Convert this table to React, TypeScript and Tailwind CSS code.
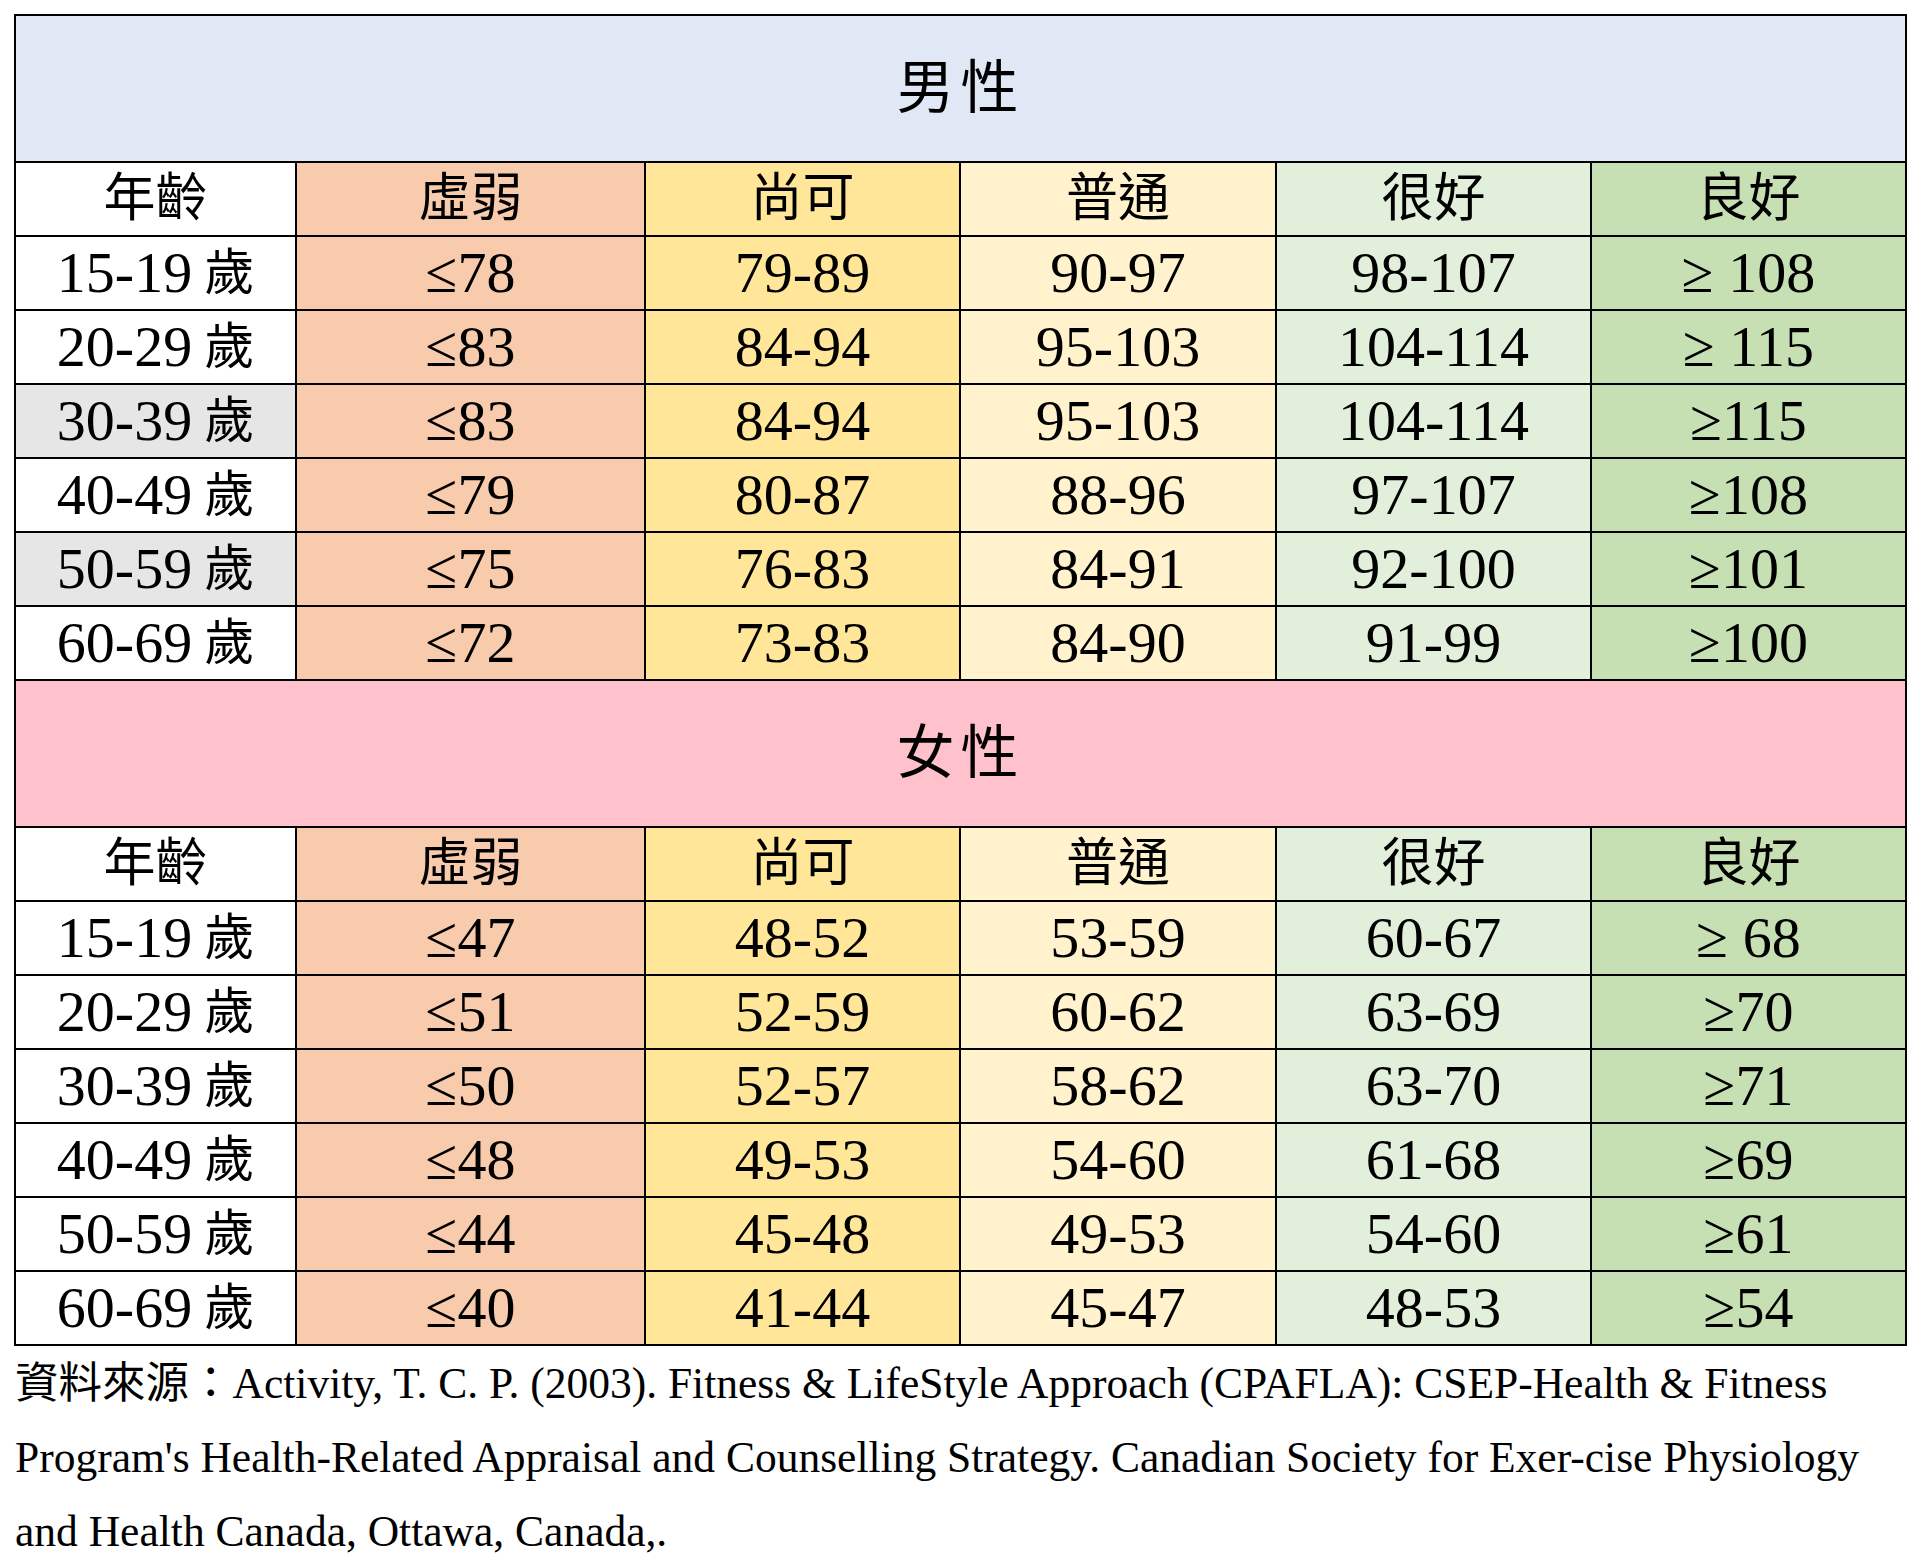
const levels = [
  { label: '虛弱', bg: 'bg-[#F8CBAD]' },
  { label: '尚可', bg: 'bg-[#FFE699]' },
  { label: '普通', bg: 'bg-[#FFF2CC]' },
  { label: '很好', bg: 'bg-[#E2EFDA]' },
  { label: '良好', bg: 'bg-[#C6E0B4]' },
]

type Row = { age: string; gray?: boolean; values: string[] }

const male: Row[] = [
  { age: '15-19', values: ['≤78', '79-89', '90-97', '98-107', '≥ 108'] },
  { age: '20-29', values: ['≤83', '84-94', '95-103', '104-114', '≥ 115'] },
  { age: '30-39', gray: true, values: ['≤83', '84-94', '95-103', '104-114', '≥115'] },
  { age: '40-49', values: ['≤79', '80-87', '88-96', '97-107', '≥108'] },
  { age: '50-59', gray: true, values: ['≤75', '76-83', '84-91', '92-100', '≥101'] },
  { age: '60-69', values: ['≤72', '73-83', '84-90', '91-99', '≥100'] },
]

const female: Row[] = [
  { age: '15-19', values: ['≤47', '48-52', '53-59', '60-67', '≥ 68'] },
  { age: '20-29', values: ['≤51', '52-59', '60-62', '63-69', '≥70'] },
  { age: '30-39', values: ['≤50', '52-57', '58-62', '63-70', '≥71'] },
  { age: '40-49', values: ['≤48', '49-53', '54-60', '61-68', '≥69'] },
  { age: '50-59', values: ['≤44', '45-48', '49-53', '54-60', '≥61'] },
  { age: '60-69', values: ['≤40', '41-44', '45-47', '48-53', '≥54'] },
]

function Section({ title, titleBg, rows }: { title: string; titleBg: string; rows: Row[] }) {
  return (
    <>
      <div className={`col-span-6 h-[145px] flex items-center justify-center text-[58px] tracking-[6px] ${titleBg}`}>
        {title}
      </div>
      <div className="h-[72px] flex items-center justify-center bg-white text-[52px]">年齡</div>
      {levels.map((l) => (
        <div key={l.label} className={`h-[72px] flex items-center justify-center text-[52px] ${l.bg}`}>
          {l.label}
        </div>
      ))}
      {rows.map((r) => (
        <div key={r.age} className="contents">
          <div className={`h-[72px] flex items-center justify-center gap-[12px] ${r.gray ? 'bg-[#E7E6E6]' : 'bg-white'}`}>
            <span>{r.age}</span>
            <span className="text-[50px]">歲</span>
          </div>
          {r.values.map((v, i) => (
            <div key={i} className={`h-[72px] flex items-center justify-center ${levels[i].bg}`}>
              {v}
            </div>
          ))}
        </div>
      ))}
    </>
  )
}

export default function App() {
  return (
    <div
      className="w-[1920px] h-[1568px] bg-white pl-[14px] pt-[14px] text-black"
      style={{ fontFamily: '"Liberation Serif", "Noto Sans CJK TC", serif' }}
    >
      <div className="w-[1893px] grid grid-cols-[279px_347px_313px_314px_313px_313px] gap-[2px] p-[2px] bg-black text-[58px] leading-none">
        <Section title="男性" titleBg="bg-[#DFE8F4]" rows={male} />
        <Section title="女性" titleBg="bg-[#FFC1CB]" rows={female} />
      </div>
      <p className="text-[43.5px] leading-[74px] whitespace-nowrap pl-[1px]">
        資料來源：Activity, T. C. P. (2003). Fitness &amp; LifeStyle Approach (CPAFLA): CSEP-Health &amp; Fitness
        <br />
        Program's Health-Related Appraisal and Counselling Strategy. Canadian Society for Exer-cise Physiology
        <br />
        and Health Canada, Ottawa, Canada,.
      </p>
    </div>
  )
}
